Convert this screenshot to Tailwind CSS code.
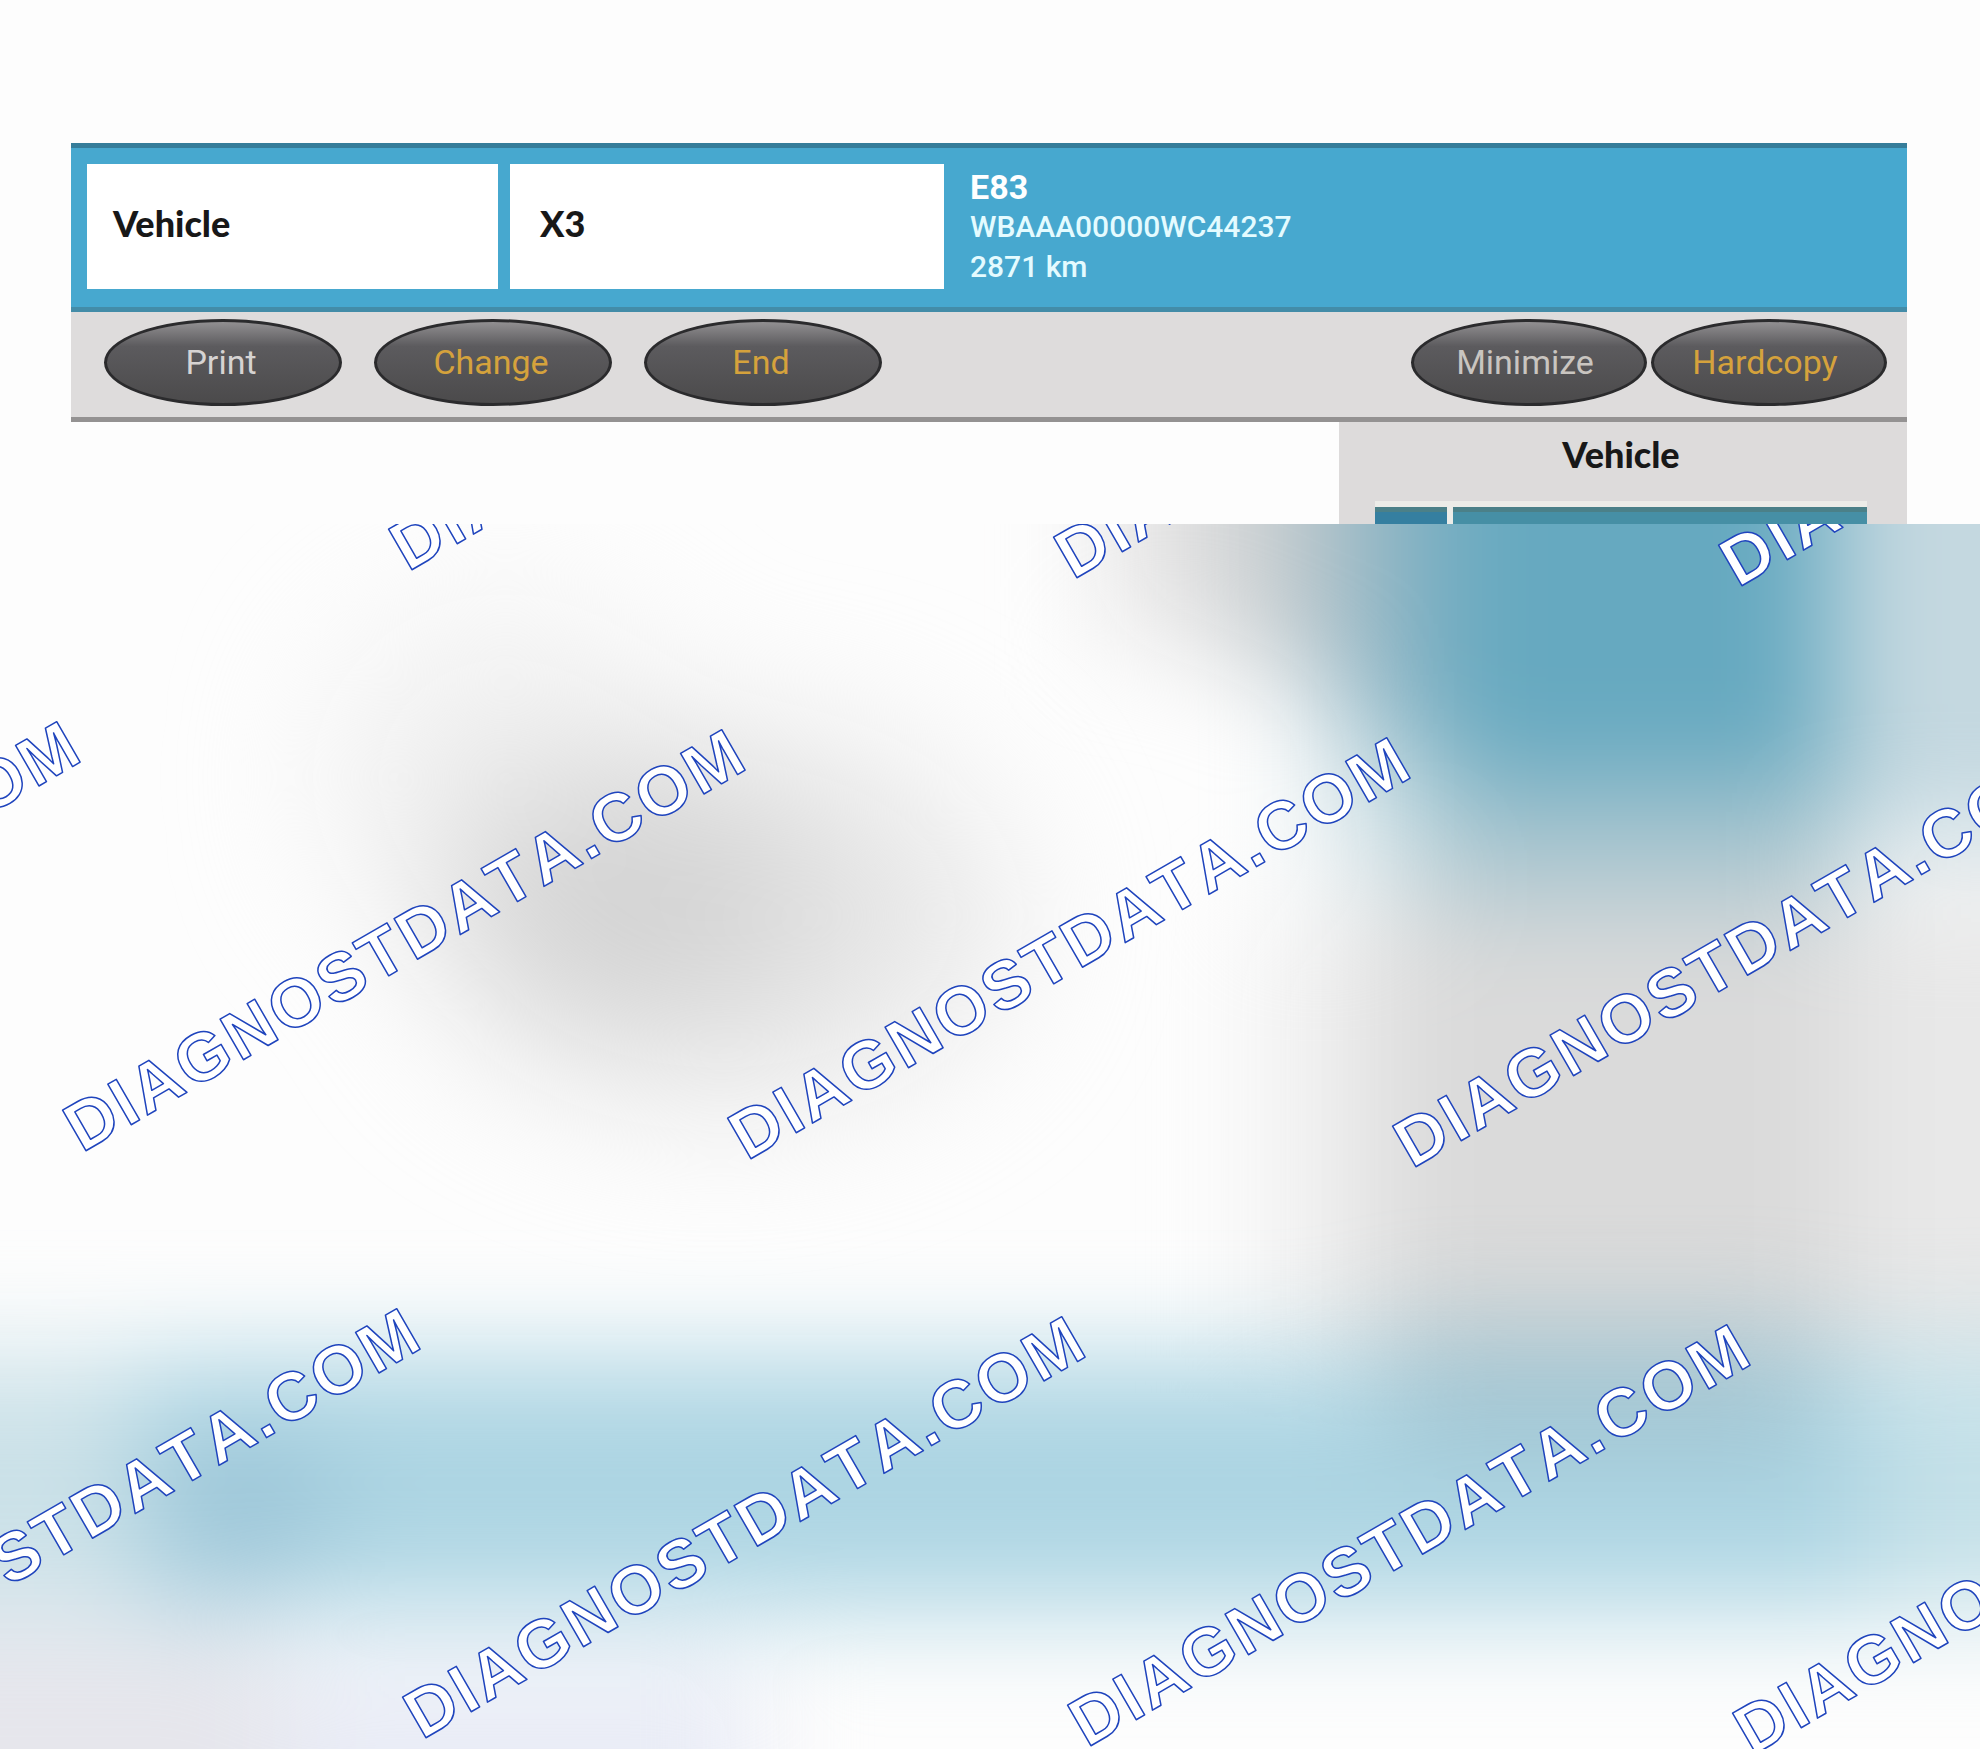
<!DOCTYPE html>
<html lang="en">
<head>
<meta charset="utf-8">
<meta name="viewport" content="width=device-width, initial-scale=1">
<title>Vehicle diagnosis</title>
<script src="https://cdn.jsdelivr.net/npm/@tailwindcss/browser@4"></script>
</head>
<body class="flex min-h-screen flex-col overflow-x-hidden bg-[#fdfdfd] font-['Roboto',sans-serif]">
  <div class="mr-[73px] ml-[71px] pt-[143px]">
    <header class="flex border-t-[5px] border-b-[5px] border-t-[#367d9a] border-b-[#438ca8] bg-[#47a8cf] px-4 pt-4 pb-[18px]">
      <div class="flex w-[857px] gap-3">
        <div class="flex h-[125px] w-[411px] items-center bg-white pb-2 pl-[26px] font-['Lato',sans-serif] text-[36px] font-black text-[#181818]">Vehicle</div>
        <div class="flex h-[125px] flex-1 items-center bg-white pb-2 pl-[30px] font-['Lato',sans-serif] text-[36px] font-black text-[#181818]">X3</div>
      </div>
      <div class="flex flex-col justify-center pl-[26px] text-[30px] leading-10 font-medium text-[#e4fbff]">
        <p class="text-[34px] font-bold text-white">E83</p>
        <p>WBAAA00000WC44237</p>
        <p>2871 km</p>
      </div>
    </header>
    <nav aria-label="Actions" class="flex h-[110px] items-center border-b-[5px] border-[#949292] bg-[#dedcdc] pr-5 pb-1 pl-[33px]">
      <div class="flex gap-8">
        <button class="h-[87px] w-[238px] rounded-[50%] border-3 border-[#2b2b2d] bg-linear-to-b from-[#929092] via-[#5c5b5e] via-30% to-[#4b4a4b] pr-1 text-[34px] text-[#d6d3d2]">Print</button>
        <button class="h-[87px] w-[238px] rounded-[50%] border-3 border-[#2b2b2d] bg-linear-to-b from-[#929092] via-[#5c5b5e] via-30% to-[#4b4a4b] pr-1 text-[34px] text-[#d5a23c]">Change</button>
        <button class="h-[87px] w-[238px] rounded-[50%] border-3 border-[#2b2b2d] bg-linear-to-b from-[#929092] via-[#5c5b5e] via-30% to-[#4b4a4b] pr-1 text-[34px] text-[#d5a23c]">End</button>
      </div>
      <div class="ml-auto flex gap-1">
        <button class="h-[87px] w-[236px] rounded-[50%] border-3 border-[#2b2b2d] bg-linear-to-b from-[#929092] via-[#5c5b5e] via-30% to-[#4b4a4b] pr-2 text-[34px] text-[#c9c5c0]">Minimize</button>
        <button class="h-[87px] w-[236px] rounded-[50%] border-3 border-[#2b2b2d] bg-linear-to-b from-[#929092] via-[#5c5b5e] via-30% to-[#4b4a4b] pr-2 text-[34px] text-[#d5a23c]">Hardcopy</button>
      </div>
    </nav>
    <aside class="ml-auto flex h-[102px] w-[568px] flex-col justify-between bg-[#dddbdb] pr-10 pl-9">
      <h2 class="pt-3 text-center font-['Lato',sans-serif] text-[36px] leading-10 font-black text-[#181818]">Vehicle</h2>
      <div class="flex gap-[6px] border-t-[6px] border-[#ecece8] bg-[#ecece8]">
        <div class="h-[17px] w-[72px] border-t-[5px] border-[#4b8088] bg-[#357fa0]"></div>
        <div class="h-[17px] flex-1 border-t-[5px] border-[#4b8088] bg-[#468fa5]"></div>
      </div>
    </aside>
  </div>

  <main class="relative flex-1 overflow-hidden">
    <!-- Defocused backdrop -->
    <svg class="absolute inset-0 h-full w-full" viewBox="0 0 1568 970" preserveAspectRatio="none" aria-hidden="true">
      <defs>
        <filter id="soft" filterUnits="userSpaceOnUse" x="-300" y="-300" width="2200" height="1600" color-interpolation-filters="sRGB"><feGaussianBlur stdDeviation="42"/></filter>
        <filter id="softer" filterUnits="userSpaceOnUse" x="-300" y="-300" width="2200" height="1600" color-interpolation-filters="sRGB"><feGaussianBlur stdDeviation="58"/></filter>
      </defs>
      <g filter="url(#softer)">
        <ellipse cx="400" cy="200" rx="140" ry="130" fill="#f0f0f0"/>
        <ellipse cx="570" cy="310" rx="230" ry="150" fill="#e7e7e7"/>
        <ellipse cx="500" cy="300" rx="140" ry="95" fill="#d3d3d3"/>
      </g>
      <g filter="url(#soft)">
        <rect x="1000" y="310" width="300" height="400" fill="#efefef"/>
        <rect x="1090" y="290" width="750" height="420" fill="#dadada"/>
        <rect x="1460" y="290" width="340" height="410" fill="#e8e8e8"/>
        <rect x="1450" y="-200" width="350" height="450" fill="#c4d8e0"/>
        <rect x="1050" y="80" width="100" height="200" fill="#d0e1e6"/>
        <rect x="1130" y="150" width="330" height="150" fill="#a8c5cf"/>
        <rect x="880" y="-200" width="130" height="290" fill="#e2e1e1"/>
        <rect x="980" y="-200" width="90" height="320" fill="#c3cacd"/>
        <rect x="1060" y="-200" width="110" height="370" fill="#8fb5c4"/>
        <rect x="1140" y="-200" width="310" height="405" fill="#66a9c0"/>
      </g>
      <g filter="url(#soft)">
        <rect x="-200" y="660" width="2000" height="200" fill="#add5e3"/>
        <rect x="-200" y="660" width="310" height="200" fill="#cbe1e8"/>
        <ellipse cx="190" cy="780" rx="75" ry="60" fill="#9dc6d8"/>
        <rect x="1100" y="640" width="340" height="90" fill="#9fc2cf"/>
        <rect x="1480" y="650" width="320" height="210" fill="#c4e0e8"/>
        <rect x="-200" y="870" width="420" height="300" fill="#e6e6ec"/>
        <rect x="220" y="900" width="380" height="300" fill="#e9ecf6"/>
      </g>
    </svg>

    <!-- Repeated diagonal watermark, cropped by the panel edges -->
    <svg class="absolute inset-0 h-full w-full fill-white stroke-[#1f44bd] stroke-[1.5] font-['Liberation_Sans',Arial,sans-serif] text-[68px] font-bold tracking-[3px] [font-kerning:none]" stroke-linejoin="round">
      <text transform="translate(408 48) rotate(-30)">DIAGNOSTDATA.COM</text>
      <text transform="translate(1073 56) rotate(-30)">DIAGNOSTDATA.COM</text>
      <text transform="translate(1738 64) rotate(-30)">DIAGNOSTDATA.COM</text>
      <text transform="translate(-583 621) rotate(-30)">DIAGNOSTDATA.COM</text>
      <text transform="translate(82 629) rotate(-30)">DIAGNOSTDATA.COM</text>
      <text transform="translate(747 637) rotate(-30)">DIAGNOSTDATA.COM</text>
      <text transform="translate(1412 645) rotate(-30)">DIAGNOSTDATA.COM</text>
      <text transform="translate(-243 1208) rotate(-30)">DIAGNOSTDATA.COM</text>
      <text transform="translate(422 1216) rotate(-30)">DIAGNOSTDATA.COM</text>
      <text transform="translate(1087 1224) rotate(-30)">DIAGNOSTDATA.COM</text>
      <text transform="translate(1752 1232) rotate(-30)">DIAGNOSTDATA.COM</text>
    </svg>
  </main>
</body>
</html>
